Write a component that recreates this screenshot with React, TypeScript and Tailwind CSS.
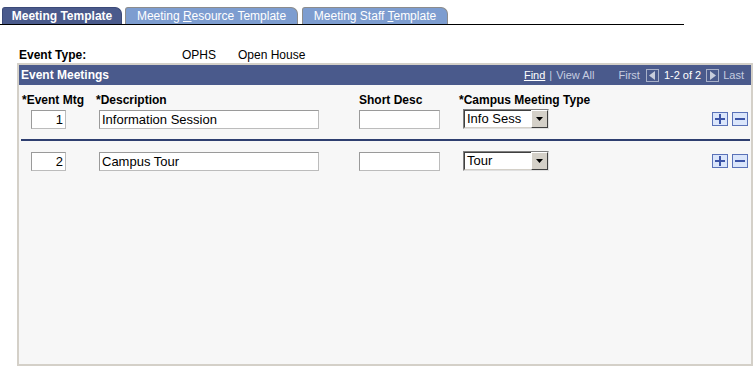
import React from "react";

const font = { fontFamily: '"Liberation Sans", Arial, sans-serif' };

function Tab({ label, active, width }: { label: React.ReactNode; active?: boolean; width: number }) {
  return (
    <div
      style={{ width }}
      className={
        active
          ? "h-[17px] bg-[#4a5a8c] rounded-tl-[3px] rounded-tr-[7px] border border-[#3c4a78] border-b-0 flex items-center justify-center text-white font-bold text-[12px]"
          : "h-[17px] bg-[#7d9dd0] rounded-tl-[3px] rounded-tr-[7px] border border-[#8c8c8c] border-b-0 flex items-center justify-center text-white text-[12px]"
      }
    >
      {label}
    </div>
  );
}

function TextBox({ value, width, right }: { value?: string; width: number; right?: boolean }) {
  return (
    <div
      style={{ width }}
      className={
        "h-[19px] bg-white border border-[#bcbcbc] border-t-[#9a9a9a] border-l-[#9a9a9a] text-[13px] text-black leading-[17px] px-[2px] " +
        (right ? "text-right" : "text-left")
      }
    >
      {value}
    </div>
  );
}

function Select({ value }: { value: string }) {
  return (
    <div className="w-[86px] h-[20px] bg-white border border-[#808080] border-r-[#e0e0e0] border-b-[#e0e0e0] flex items-center">
      <div className="flex-1 h-full border border-[#404040] border-r-0 border-b-[#d4d0c8] flex items-center pl-[2px] text-[13px] text-black">
        {value}
      </div>
      <div className="w-[17px] h-full bg-[#d4d0c8] border border-t-white border-l-white border-r-[#404040] border-b-[#404040] flex items-center justify-center">
        <svg width="7" height="4" viewBox="0 0 7 4">
          <path d="M0 0h7L3.5 4z" fill="#000" />
        </svg>
      </div>
    </div>
  );
}

function RowButtons() {
  return (
    <div className="flex gap-[4px]">
      <div className="w-[16px] h-[14px] bg-[#dbe6fb] border border-[#5a72b8] flex items-center justify-center">
        <svg width="10" height="10" viewBox="0 0 10 10">
          <path d="M4 0h2v4h4v2H6v4H4V6H0V4h4z" fill="#3d55a8" />
        </svg>
      </div>
      <div className="w-[16px] h-[14px] bg-[#dbe6fb] border border-[#5a72b8] flex items-center justify-center">
        <svg width="10" height="10" viewBox="0 0 10 10">
          <path d="M0 4h10v2H0z" fill="#3d55a8" />
        </svg>
      </div>
    </div>
  );
}

function PagerIcon({ dir }: { dir: "left" | "right" }) {
  return (
    <div className="w-[13px] h-[13px] border border-[#a8b0c8] flex items-center justify-center">
      <svg width="6" height="9" viewBox="0 0 6 9">
        {dir === "left" ? <path d="M6 0v9L0 4.5z" fill="#c8cddc" /> : <path d="M0 0v9l6-4.5z" fill="#c8cddc" />}
      </svg>
    </div>
  );
}

function DataRow({ num, desc, type }: { num: string; desc: string; type: string }) {
  return (
    <div className="flex items-center h-[20px]">
      <div className="w-[77px] pl-[12px]">
        <TextBox value={num} width={35} right />
      </div>
      <div className="w-[263px] pl-[3px]">
        <TextBox value={desc} width={220} />
      </div>
      <div className="w-[100px]">
        <TextBox width={81} />
      </div>
      <div className="w-[253px] pl-[4px]">
        <Select value={type} />
      </div>
      <RowButtons />
    </div>
  );
}

export default function App() {
  return (
    <div style={font} className="w-[756px] h-[369px] bg-white overflow-hidden">
      <div className="pt-[7px] pl-[2px] w-[684px] border-b border-black flex gap-[3px] items-end">
        <Tab label="Meeting Template" active width={120} />
        <Tab
          label={
            <span>
              Meeting <span className="underline">R</span>esource Template
            </span>
          }
          width={173}
        />
        <div className="ml-[1px]">
          <Tab
            label={
              <span>
                Meeting Staff <span className="underline">T</span>emplate
              </span>
            }
            width={146}
          />
        </div>
      </div>

      <div className="flex items-center h-[14px] mt-[23px] text-[12px] text-black">
        <div className="pl-[19px] w-[182px] font-bold">Event Type:</div>
        <div className="w-[56px]">OPHS</div>
        <div>Open House</div>
      </div>

      <div className="ml-[17px] mt-[1px] w-[736px] h-[303px] border-2 border-[#d4d0c8] bg-[#f7f7f7] flex flex-col">
        <div className="h-[20px] bg-[#4a5a8c] flex items-center justify-between pl-[2px] pr-[7px] text-[12px]">
          <span className="text-white font-bold">Event Meetings</span>
          <div className="flex items-center text-[11px] text-[#c6cde0]">
            <span className="text-white underline">Find</span>
            <span className="mx-[4px]">|</span>
            <span>View All</span>
            <span className="ml-[24px] mr-[6px]">First</span>
            <PagerIcon dir="left" />
            <span className="text-white mx-[5px]">1-2 of 2</span>
            <PagerIcon dir="right" />
            <span className="ml-[4px]">Last</span>
          </div>
        </div>

        <div className="flex items-center h-[14px] mt-[8px] text-[12px] font-bold text-black">
          <div className="w-[77px] pl-[3px]">*Event Mtg</div>
          <div className="w-[263px]">*Description</div>
          <div className="w-[100px]">Short Desc</div>
          <div>*Campus Meeting Type</div>
        </div>

        <div className="mt-[2px]">
          <DataRow num="1" desc="Information Session" type="Info Sess" />
        </div>

        <div className="mt-[10px] ml-[2px] mr-[1px] h-[2px] bg-[#2e3f70]" />

        <div className="mt-[10px]">
          <DataRow num="2" desc="Campus Tour" type="Tour" />
        </div>
      </div>
    </div>
  );
}
